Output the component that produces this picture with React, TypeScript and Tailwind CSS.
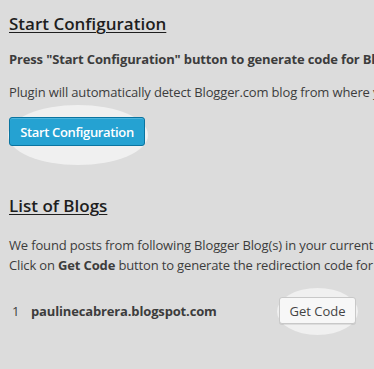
import React from "react";

export default function App() {
  return (
    <div
      className="w-[374px] h-[369px] overflow-hidden bg-[#dcdcdc] text-[#3c3c3c] text-[13px] leading-[20px] tracking-[-0.15px]"
      style={{ fontFamily: '"Open Sans", "Liberation Sans", sans-serif' }}
    >
      <div className="pl-[9px] pt-[12px] whitespace-nowrap">
        <h2 className="text-[17px] leading-[24px] font-semibold text-[#1e1e1e] tracking-normal underline underline-offset-[2px] decoration-[1px]">
          Start Configuration
        </h2>
        <p className="mt-[13px] font-bold">
          Press "Start Configuration" button to generate code for Blogger.com
        </p>
        <p className="mt-[13px]">
          Plugin will automatically detect Blogger.com blog from where you imported
        </p>
        <div className="relative mt-[15px] w-fit">
          <div className="absolute left-[-1px] top-[-12px] w-[140px] h-[60px] rounded-[50%] bg-[#f0f0f0]" />
          <button className="relative h-[29px] w-[136px] rounded-[3px] border border-[#0a74a0] bg-[#25a2d2] text-white text-[13px] font-semibold tracking-[-0.35px] shadow-[inset_0_1px_0_rgba(120,200,230,0.5)]">
            Start Configuration
          </button>
        </div>
        <h2 className="mt-[48px] text-[17px] leading-[24px] font-semibold text-[#1e1e1e] tracking-normal underline underline-offset-[2px] decoration-[1px]">
          List of Blogs
        </h2>
        <p className="mt-[17px]">
          We found posts from following Blogger Blog(s) in your current WordPress
          <br />
          Click on <b>Get Code</b> button to generate the redirection code for
        </p>
        <div className="mt-[22px] flex items-center h-[27px]">
          <span className="w-[22px] pl-[3px]">1</span>
          <span className="font-bold w-[248px]">paulinecabrera.blogspot.com</span>
          <div className="relative">
            <div className="absolute left-[-2px] top-[-9px] w-[81px] h-[47px] rounded-[50%] bg-[#f0f0f0]" />
            <button className="relative h-[27px] w-[77px] rounded-[3px] border border-[#c8c8c8] bg-[#f7f7f7] text-[#444] text-[13px] tracking-normal shadow-[0_1px_0_rgba(0,0,0,0.08)]">
              Get Code
            </button>
          </div>
        </div>
      </div>
    </div>
  );
}
